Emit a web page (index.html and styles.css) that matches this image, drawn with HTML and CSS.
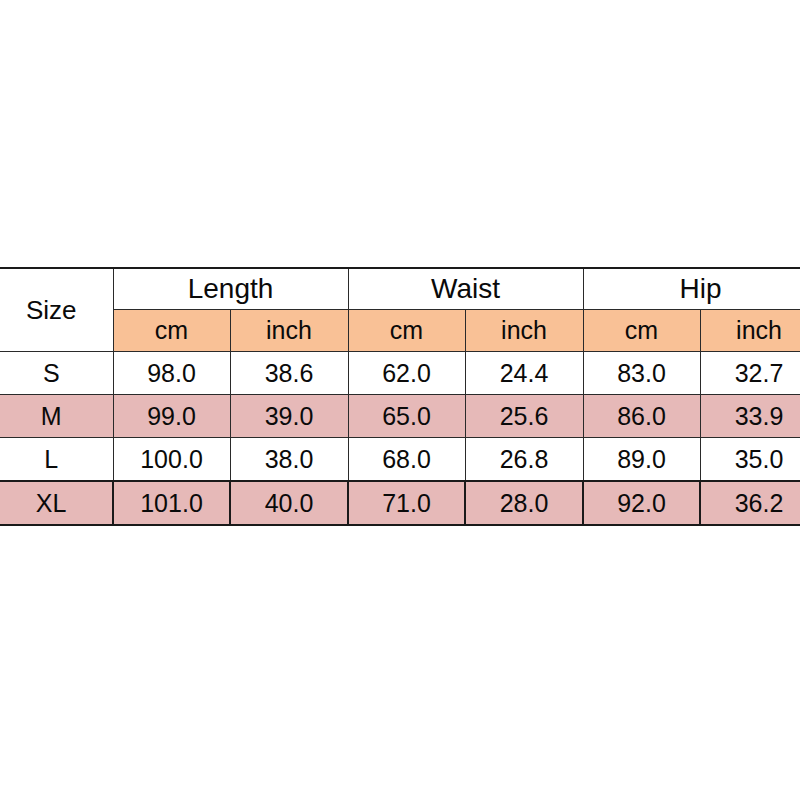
FILE: index.html
```html
<!DOCTYPE html>
<html>
<head>
<meta charset="utf-8">
<link rel="stylesheet" href="styles.css">
</head>
<body>
<div class="page">
  <table class="chart">
    <colgroup>
      <col class="c-size"><col class="c-a"><col class="c-b"><col class="c-a"><col class="c-b"><col class="c-a"><col class="c-b">
    </colgroup>
    <thead>
      <tr class="h1">
        <th rowspan="2" class="size-h">Size</th>
        <th colspan="2">Length</th>
        <th colspan="2">Waist</th>
        <th colspan="2">Hip</th>
      </tr>
      <tr class="h2">
        <th>cm</th><th>inch</th><th>cm</th><th>inch</th><th>cm</th><th>inch</th>
      </tr>
    </thead>
    <tbody>
      <tr class="row"><td>S</td><td>98.0</td><td>38.6</td><td>62.0</td><td>24.4</td><td>83.0</td><td>32.7</td></tr>
      <tr class="row pink"><td>M</td><td>99.0</td><td>39.0</td><td>65.0</td><td>25.6</td><td>86.0</td><td>33.9</td></tr>
      <tr class="row"><td>L</td><td>100.0</td><td>38.0</td><td>68.0</td><td>26.8</td><td>89.0</td><td>35.0</td></tr>
      <tr class="row pink last"><td>XL</td><td>101.0</td><td>40.0</td><td>71.0</td><td>28.0</td><td>92.0</td><td>36.2</td></tr>
    </tbody>
  </table>
</div>
</body>
</html>
```

FILE: styles.css
```css
html, body {
  margin: 0;
  padding: 0;
  background: #ffffff;
  overflow: hidden;
}
.page {
  width: 800px;
  height: 800px;
  padding-top: 267px;
  box-sizing: border-box;
  overflow: hidden;
}
.chart {
  margin-left: -10px;
  border-collapse: collapse;
  table-layout: fixed;
  width: 827px;
  font-family: "Liberation Sans", Arial, sans-serif;
  font-size: 25px;
  color: #0a0a0a;
  border-top: 2px solid #1a1a1a;
}
.c-size { width: 123px; }
.c-a { width: 117px; }
.c-b { width: 118px; }
.chart th, .chart td {
  border: 1px solid #2a2a2a;
  text-align: center;
  font-weight: normal;
  padding: 0;
  line-height: 1;
}
.chart tr > :first-child { border-left: none; }
.h1 th { height: 40px; background: #ffffff; font-size: 28px; }
.h1 .size-h { font-size: 26px; }
.h2 th { height: 41px; background: #f9c196; }
.row td { height: 42px; background: #ffffff; }
.row.pink td { background: #e6b9b8; }
.row.last td { border: 2px solid #1a1a1a; }
.row.last td:first-child { border-left: none; }
```
